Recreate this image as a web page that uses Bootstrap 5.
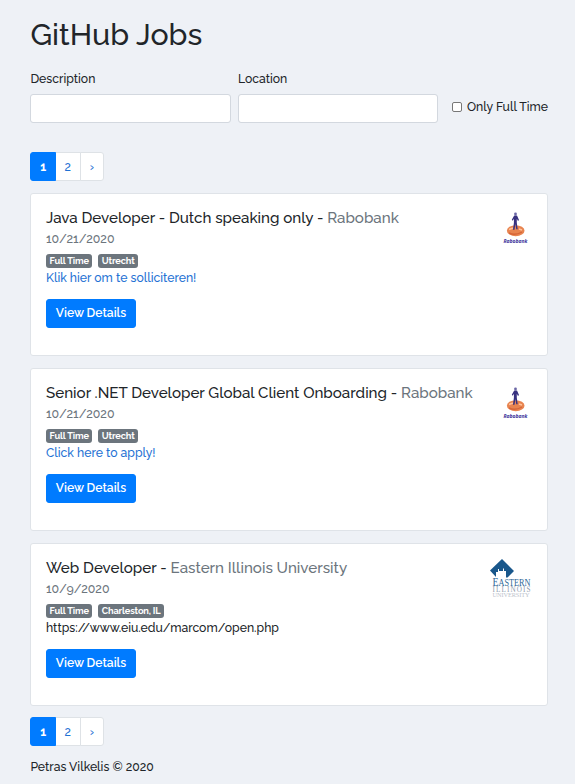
<!DOCTYPE html>
<html lang="en">
<head>
<meta charset="utf-8">
<meta name="viewport" content="width=device-width, initial-scale=1">
<title>GitHub Jobs</title>
<link href="https://cdn.jsdelivr.net/npm/bootstrap@5.3.0/dist/css/bootstrap.min.css" rel="stylesheet">
<style>
html{font-size:12px}
body{background:#eef1f6;color:#212529;font-family:Raleway,Lato,"Open Sans",sans-serif;font-size:12.2px;line-height:18px;font-weight:500;overflow:hidden}
.page{padding:17px 27px 0 30.4px}
h1{font-size:30.3px;line-height:36px;font-weight:500;margin:0 0 17px}
.form-label{margin-bottom:6px;display:block}
.search-box{width:200.5px}
.search-box+.search-box{margin-left:7px}
.search-box .form-control{height:29px;border:1px solid #d3d8df;border-radius:3px}
.full-time{padding-bottom:7px}
.full-time input{width:10px;height:10px;margin:0 5px 0 0;border:1px solid #777;border-radius:2px;appearance:none;background:#fff}
.pages-top{margin:29px 0 12px}
.pagination{--bs-pagination-font-size:12px;--bs-pagination-border-color:#dee2e6;--bs-pagination-active-bg:#007bff;--bs-pagination-active-border-color:#007bff;--bs-pagination-color:#1f72d4;--bs-pagination-border-radius:3px;margin:0}
.page-link{height:29px;padding:5px 0;line-height:18px;text-align:center;width:25.6px}
.page-item:last-child .page-link{width:24.4px}
.page-item.active{font-weight:700}
.job{height:163px;padding:15px 15px 15px 14.6px;border:1px solid #dfe3e8;border-radius:3px;margin-bottom:11.8px}
.job-title{font-size:15.15px;line-height:18px;font-weight:500;margin:0 0 3px;white-space:nowrap}
.company,.date{color:#6c757d}
.date{font-size:12.35px;margin-bottom:6px;line-height:18px}
.tags{height:14px;gap:6px}
.tags .badge{font-size:9.25px;line-height:9px;letter-spacing:-.15px;font-weight:700;padding:2px 3.5px 3px;background:#6c757d;border-radius:3px;height:14px;white-space:nowrap}
.apply{color:#1f72d4;text-decoration:none}
.summary{line-height:18px;padding-top:1px;margin-bottom:12px}
.btn-primary{--bs-btn-bg:#007bff;--bs-btn-border-color:#007bff;font-size:12.1px;line-height:18px;font-weight:600;padding:4px 0 5px;width:90px;height:29px;border-radius:3px;white-space:nowrap}
.logo{width:50px;height:50px;flex:none}
</style>
<script src="https://cdn.jsdelivr.net/npm/bootstrap@5.3.0/dist/js/bootstrap.bundle.min.js"></script>
</head>
<body>
<svg class="d-none">
<symbol id="rabo" viewBox="0 0 50 50">
<ellipse cx="33.7" cy="21.7" rx="8.8" ry="5.5" fill="#e88450"/>
<path d="M27 24q6 3 13-1" stroke="#c95028" stroke-width="1.4" fill="none" opacity=".6"/>
<path d="M27 20.5l4-1.5M37 20l3 1" stroke="#ffc29a" stroke-width="1.5"/>
<circle cx="33.5" cy="5" r="1.4" fill="#6a66a5"/>
<path d="M32.2 6.5h2.8l2 4.5-1 1-1.2-2.3v4l.9 6.5h-1.4l-.9-5-.9 5.5H31l.9-7v-4l-1.2 2-.9-.9z" fill="#37317f"/>
<text x="21.5" y="33.6" textLength="24" lengthAdjust="spacingAndGlyphs" font-family="Open Sans,sans-serif" font-size="5.8" font-weight="700" font-style="italic" fill="#3b349b">Rabobank</text>
</symbol>
<symbol id="eiu" viewBox="0 0 50 50">
<path d="M8 11.5L20 0 32 12 25.5 18.5h-1.500V12h-2V9.500h-1V12h-4v-2h-1v3h-2v5z" fill="#19578b"/>
<text x="10.5" y="27.3" textLength="38" lengthAdjust="spacingAndGlyphs" font-family="Liberation Serif,serif" fill="#2f6896"><tspan font-size="12">E</tspan><tspan font-size="10">ASTERN</tspan></text>
<text x="10.5" y="32.800" textLength="38" font-family="Liberation Serif,serif" font-size="7.2" fill="#8f9dae">ILLINOIS</text>
<text x="10.5" y="37.600" textLength="37" font-family="Liberation Serif,serif" font-size="6.3" fill="#bcc3cc">UNIVERSITY</text>
</symbol>
</svg>
<main class="page">
<h1>GitHub Jobs</h1>
<form class="d-flex align-items-end">
<div class="search-box"><label class="form-label" for="desc">Description</label><input id="desc" class="form-control"></div>
<div class="search-box"><label class="form-label" for="loc">Location</label><input id="loc" class="form-control"></div>
<label class="full-time d-flex align-items-center ms-auto text-nowrap"><input type="checkbox">Only Full Time</label>
</form>
<nav class="pages-top"><ul class="pagination"><li class="page-item active"><a class="page-link" href="#">1</a></li><li class="page-item"><a class="page-link" href="#">2</a></li><li class="page-item"><a class="page-link" href="#">›</a></li></ul></nav>
<article class="job bg-white d-flex justify-content-between"><div><h2 class="job-title">Java Developer - Dutch speaking only - <span class="company">Rabobank</span></h2><div class="date">10/21/2020</div><div class="tags d-flex"><span class="badge">Full Time</span><span class="badge">Utrecht</span></div><div class="summary"><a class="apply" href="#">Klik hier om te solliciteren!</a></div><button class="btn btn-primary">View Details</button></div><svg class="logo"><use href="#rabo"/></svg></article>
<article class="job bg-white d-flex justify-content-between"><div><h2 class="job-title">Senior .NET Developer Global Client Onboarding - <span class="company">Rabobank</span></h2><div class="date">10/21/2020</div><div class="tags d-flex"><span class="badge">Full Time</span><span class="badge">Utrecht</span></div><div class="summary"><a class="apply" href="#">Click here to apply!</a></div><button class="btn btn-primary">View Details</button></div><svg class="logo"><use href="#rabo"/></svg></article>
<article class="job bg-white d-flex justify-content-between"><div><h2 class="job-title">Web Developer - <span class="company">Eastern Illinois University</span></h2><div class="date">10/9/2020</div><div class="tags d-flex"><span class="badge">Full Time</span><span class="badge">Charleston, IL</span></div><div class="summary">https://www.eiu.edu/marcom/open.php</div><button class="btn btn-primary">View Details</button></div><svg class="logo"><use href="#eiu"/></svg></article>
<nav><ul class="pagination"><li class="page-item active"><a class="page-link" href="#">1</a></li><li class="page-item"><a class="page-link" href="#">2</a></li><li class="page-item"><a class="page-link" href="#">›</a></li></ul></nav>
<footer class="mt-2 pt-2">Petras Vilkelis © 2020</footer>
</main>
</body>
</html>
